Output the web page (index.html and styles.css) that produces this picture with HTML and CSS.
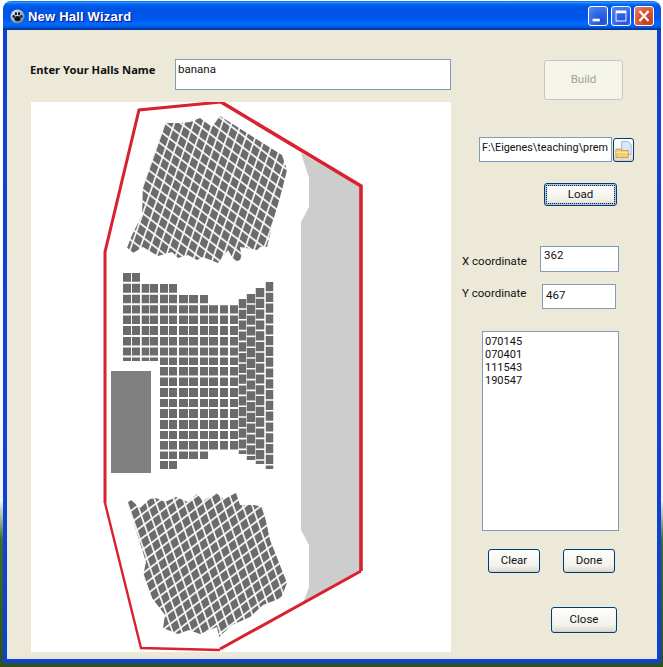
FILE: index.html
```html
<!DOCTYPE html>
<html lang="en">
<head>
<meta charset="utf-8">
<title>New Hall Wizard</title>
<link rel="stylesheet" href="styles.css">
</head>
<body>
<div class="window">
  <header class="titlebar">
    <svg class="app-icon" viewBox="0 0 16 16">
      <defs>
        <radialGradient id="ball" cx="35%" cy="30%" r="80%"><stop offset="0" stop-color="#e8eef5"/><stop offset=".6" stop-color="#9fb4cc"/><stop offset="1" stop-color="#4a6c96"/></radialGradient>
      </defs>
      <circle cx="8" cy="8" r="7.5" fill="url(#ball)"/>
      <ellipse cx="8" cy="10.2" rx="3.4" ry="2.8" fill="#111"/>
      <ellipse cx="3.9" cy="7.6" rx="1.2" ry="1.6" fill="#111"/>
      <ellipse cx="6.3" cy="5" rx="1.2" ry="1.7" fill="#111"/>
      <ellipse cx="9.7" cy="5" rx="1.2" ry="1.7" fill="#111"/>
      <ellipse cx="12.1" cy="7.6" rx="1.2" ry="1.6" fill="#111"/>
    </svg>
    <span class="title-text">New Hall Wizard</span>
    <div class="caption-buttons">
      <span class="cap cap-blue"><svg viewBox="0 0 20 20"><rect x="4" y="13" width="8" height="3" fill="#fff"/></svg></span>
      <span class="cap cap-blue"><svg viewBox="0 0 20 20"><path d="M4 4h12v12H4z M5 7v8h10V7z" fill="#fff" fill-rule="evenodd"/></svg></span>
      <span class="cap cap-red"><svg viewBox="0 0 20 20"><path d="M5 4.5 15 15.5M15 4.5 5 15.5" stroke="#fff" stroke-width="2.4" fill="none"/></svg></span>
    </div>
  </header>
  <div class="client">
    <main class="left">
      <div class="name-row">
        <label class="name-label">Enter Your Halls Name</label>
        <div class="field name-field">banana</div>
      </div>
      <div class="picture">
        <svg class="hall" viewBox="31 102 420 550">
          <defs>
            <pattern id="seatsUp" patternUnits="userSpaceOnUse" width="10" height="10" patternTransform="matrix(.75 .58 -.33 .94 165 123)">
              <rect width="10" height="10" fill="#fff"/>
              <rect x=".9" y=".9" width="8.2" height="8.2" fill="#6b6b6b"/>
            </pattern>
            <pattern id="seatsDown" patternUnits="userSpaceOnUse" width="10" height="10" patternTransform="matrix(.75 -.58 .33 .94 127 502)">
              <rect width="10" height="10" fill="#fff"/>
              <rect x=".9" y=".9" width="8.2" height="8.2" fill="#6b6b6b"/>
            </pattern>
          </defs>

          <polygon class="stage" points="301,153 361,187 361,571 303,603 309,587 309,545 301,530 301,222 309,207 309,178"/>

          <polygon fill="url(#seatsUp)" points="165,123 175,123 180,123 190,122 200,118 212,127 220,116 282,155 287,170 282,190 275,215 267,247 260,247 257,250 240,247 242,259 235,262 228,250 218,263 203,257 197,260 188,255 178,258 172,252 158,256 143,247 133,253 127,248 132,235 142,215 143,185 155,150"/>
          <polygon fill="url(#seatsDown)" points="127,501 131,500 140,508 150,499 156,498 165,502 176,497 188,502 197,494 203,501 216,493 224,499 236,493 240,505 254,505 263,507 270,540 287,583 281,598 263,605 250,617 232,625 219,637 217,627 200,634 189,630 178,634 163,628 165,615 152,598 143,576 146,562 127,502"/>

          <g class="seat-block">
            <rect x="123" y="273" width="8" height="88"/>
            <rect x="132" y="273" width="8" height="88"/>
            <rect x="141.7" y="284" width="7.6" height="77"/>
            <rect x="150" y="284" width="8" height="77"/>
            <rect x="160" y="284" width="8" height="185"/>
            <rect x="169" y="284" width="8" height="185"/>
            <rect x="179" y="295" width="9" height="164"/>
            <rect x="189" y="295" width="9" height="164"/>
            <rect x="200" y="295" width="8" height="164"/>
            <rect x="209" y="305" width="9" height="145"/>
            <rect x="220" y="305" width="8" height="145"/>
            <rect x="230" y="305" width="8" height="145"/>
          </g>
          <path class="seat-gaps" d="M123 282.8H238M123 293.7H238M123 304.3H238M123 314.5H238M123 325H238M123 336H238M123 346.6H238M123 356.5H238M159 366H238M159 376.5H238M159 387H238M159 398H238M159 408H238M159 419H238M159 430H238M159 440H238M159 450.5H238M159 460H238"/>
          <g class="seat-lines">
            <line x1="242.5" x2="242.5" y1="299" y2="454" stroke-width="7.5"/>
            <line x1="251" x2="251" y1="294" y2="460" stroke-width="8.5"/>
            <line x1="260" x2="260" y1="288" y2="464" stroke-width="8.5"/>
            <line x1="269.5" x2="269.5" y1="282" y2="469" stroke-width="7.5"/>
          </g>
          <rect class="block" x="111" y="371" width="40" height="102"/>

          <polyline class="outline" points="105,503 105,252 139,110 221,102"/>
          <polyline class="outline outline-heavy" points="221,102 361,186 361,571"/>
          <polyline class="outline" points="361,571 220,649"/>
          <polyline class="outline outline-light" points="220,650 141,648 105,503"/>
        </svg>
      </div>
    </main>
    <aside class="right">
      <button class="btn btn-build" disabled>Build</button>
      <div class="path-row">
        <div class="field path-field">F:\Eigenes\teaching\prem</div>
        <button class="btn btn-folder" aria-label="Browse">
          <svg viewBox="0 0 20 22">
            <path d="M8 2h7l3 3v11H8z" fill="#dbe6f6" stroke="#8ea6c8" stroke-width=".8"/>
            <path d="M2 10h5l1 1.5h7V19H2z" fill="#f6cf74" stroke="#b98f35" stroke-width=".8"/>
            <path d="M2 13.5h13" stroke="#fbe7b0" stroke-width="1"/>
          </svg>
        </button>
      </div>
      <button class="btn btn-load">Load</button>
      <div class="coord-row coord-x">
        <label class="coord-label">X coordinate</label>
        <div class="field coord-field">362</div>
      </div>
      <div class="coord-row coord-y">
        <label class="coord-label">Y coordinate</label>
        <div class="field coord-field">467</div>
      </div>
      <ul class="field list">
        <li>070145</li>
        <li>070401</li>
        <li>111543</li>
        <li>190547</li>
      </ul>
      <div class="action-row">
        <button class="btn btn-small">Clear</button>
        <button class="btn btn-small">Done</button>
      </div>
      <button class="btn btn-close">Close</button>
    </aside>
  </div>
</div>
</body>
</html>
```

FILE: styles.css
```css
* { box-sizing: border-box; }
html, body { margin: 0; height: 100%; }
body {
  width: 663px;
  height: 667px;
  overflow: hidden;
  padding: 1px 2px 0 3px;
  background: linear-gradient(180deg, #fff 0, #f4f6fb 500px, #3d6b2a 540px, #2f5020 100%);
  font-family: Roboto, "Noto Sans", sans-serif;
  font-size: 11.5px;
  color: #111;
}
.window {
  width: 658px;
  height: 662px;
  display: flex;
  flex-direction: column;
}
.titlebar {
  height: 29px;
  flex: none;
  display: flex;
  align-items: center;
  padding: 0 7px 0 7px;
  border-radius: 8px 8px 0 0;
  background: linear-gradient(180deg, #0058ee 0%, #3593ff 4%, #288eff 6%, #127dff 8%, #036ffc 10%, #0262ee 14%, #0057e5 20%, #0054e3 24%, #0055eb 56%, #005bf5 66%, #026afe 76%, #0062ef 86%, #0052d6 92%, #0040ab 94%, #003092 100%);
}
.app-icon { width: 15px; height: 15px; flex: none; margin-top: 2px; }
.title-text {
  margin-left: 3px;
  margin-top: 2px;
  font: bold 13px "Liberation Sans", sans-serif;
  letter-spacing: .2px;
  color: #fff;
  text-shadow: 1px 1px 1px #0f1089;
}
.caption-buttons { margin-left: auto; display: flex; gap: 3px; }
.cap {
  width: 20px;
  height: 20px;
  border: 1px solid #fff;
  border-radius: 3px;
  display: block;
  margin-top: 1px;
}
.cap svg { display: block; width: 18px; height: 18px; }
.cap-blue { background: radial-gradient(circle at 70% 75%, #1c50d8 0, #2f66e8 45%, #5d8df0 100%); }
.cap-red { background: radial-gradient(circle at 70% 75%, #c2371a 0, #d95a3a 55%, #e88a70 100%); }

.client {
  flex: 1;
  display: flex;
  background: #ece9d8;
  border: solid #0c43d6;
  border-width: 0 4px 4px 4px;
  min-height: 0;
}
.left { width: 444px; flex: none; padding-left: 23px; }
.name-row { height: 72px; display: flex; align-items: flex-start; padding-top: 29px; }
.name-label {
  width: 145px;
  flex: none;
  margin-top: 3px;
  font: bold 11.2px "Noto Sans", sans-serif;
}
.field {
  background: #fff;
  border: 1px solid #7f9db9;
}
.name-field { width: 276px; height: 31px; padding: 2px 2px; }
.picture { margin-left: 1px; width: 420px; height: 550px; background: #fff; }
.hall { display: block; width: 420px; height: 550px; }
.stage { fill: #cdcdcd; }
.seat-block rect { fill: #6b6b6b; }
.seat-gaps { stroke: #fff; stroke-width: 2; fill: none; }
.seat-lines line { stroke: #6b6b6b; stroke-dasharray: 9.2 1.6; }
.block { fill: #808080; }
.outline { fill: none; stroke: #d9222f; stroke-width: 3; stroke-linejoin: miter; }
.outline-heavy { stroke-width: 3.6; }
.outline-light { stroke-width: 2.4; }

.right {
  flex: 1;
  min-width: 0;
  display: flex;
  flex-direction: column;
  align-items: flex-start;
}
.btn {
  font: inherit;
  color: #111;
  padding: 0 0 2px;
  border: 1px solid #003c74;
  border-radius: 3px;
  background: linear-gradient(180deg, #fff 0, #f3f2ec 70%, #dcd8cc 100%);
  box-shadow: inset 0 -1px 1px #d6d0c5;
}
.btn-build {
  margin: 30px 0 0 93px;
  width: 79px;
  height: 40px;
  background: #f5f4ea;
  border-color: #c9c7ba;
  color: #a1a192;
  box-shadow: none;
}
.path-row { margin: 37px 0 0 28px; display: flex; gap: 1px; align-items: flex-start; }
.path-field { width: 133px; height: 25px; padding: 3px 2px; font-size: 10.8px; white-space: nowrap; overflow: hidden; }
.btn-folder { width: 21px; height: 24px; margin-top: 1px; display: block; padding: 0; }
.btn-folder svg { display: block; width: 19px; height: 22px; }
.btn-load {
  margin: 21px 0 0 93px;
  width: 73px;
  height: 23px;
  outline: 1px dotted #222;
  outline-offset: -3px;
  box-shadow: inset 0 0 0 2px #a9c4ea;
}
.coord-row { display: flex; align-items: flex-start; margin-left: 11px; }
.coord-x { margin-top: 40px; }
.coord-y { margin-top: 12px; }
.coord-label { flex: none; }
.coord-x .coord-label { width: 78px; margin-top: 8px; }
.coord-y .coord-label { width: 80px; margin-top: 2px; }
.coord-x .coord-field { width: 79px; height: 26px; padding: 1px 3px; }
.coord-y .coord-field { width: 74px; height: 25px; padding: 3px 3px; }
.list {
  list-style: none;
  margin: 22px 0 0 31px;
  width: 137px;
  height: 200px;
  padding: 3px 2px;
  font-size: 11px;
  line-height: 13px;
}
.action-row { margin: 18px 0 0 37px; display: flex; gap: 23px; }
.btn-small { width: 52px; height: 24px; }
.btn-close { margin: 34px 0 0 100px; width: 66px; height: 26px; }
```
